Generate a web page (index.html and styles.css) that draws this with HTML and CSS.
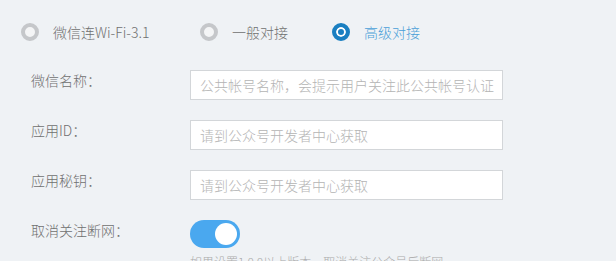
FILE: index.html
```html
<!DOCTYPE html>
<html lang="zh">
<head>
<meta charset="utf-8">
<link rel="stylesheet" href="styles.css">
</head>
<body>
<div class="page">
  <div class="radios">
    <label class="radio"><span class="dot"></span><span class="rtext">微信连Wi-Fi-3.1</span></label>
    <label class="radio"><span class="dot"></span><span class="rtext">一般对接</span></label>
    <label class="radio on"><span class="dot"></span><span class="rtext">高级对接</span></label>
  </div>
  <div class="form">
    <div class="row">
      <div class="lbl">微信名称：</div>
      <div class="field"><div class="input">公共帐号名称，会提示用户关注此公共帐号认证</div></div>
    </div>
    <div class="row">
      <div class="lbl">应用ID：</div>
      <div class="field"><div class="input">请到公众号开发者中心获取</div></div>
    </div>
    <div class="row">
      <div class="lbl">应用秘钥：</div>
      <div class="field"><div class="input">请到公众号开发者中心获取</div></div>
    </div>
    <div class="row">
      <div class="lbl">取消关注断网：</div>
      <div class="field">
        <div class="switch"><span class="knob"></span></div>
        <div class="hint">如果设置1.0.0以上版本，取消关注公众号后断网</div>
      </div>
    </div>
  </div>
</div>
</body>
</html>
```

FILE: styles.css
```css
html, body {
  margin: 0;
  padding: 0;
}
body {
  background: #eff2f5;
  font-family: "Microsoft YaHei", "Noto Sans CJK SC", "Noto Sans", sans-serif;
  font-size: 14px;
  font-weight: 300;
  color: #707070;
  width: 616px;
  height: 261px;
  overflow: hidden;
}
.page {
  padding: 22px 0 0 21px;
}
.radios {
  display: flex;
  align-items: center;
  height: 20px;
}
.radio {
  display: flex;
  align-items: center;
}
.radio:nth-child(1) { width: 179px; }
.radio:nth-child(2) { width: 132px; }
.dot {
  width: 18px;
  height: 18px;
  box-sizing: border-box;
  border-radius: 50%;
  border: 4px solid #c5c7ca;
  background: #f4f5f6;
  margin-right: 14px;
}
.radio.on .dot {
  border: 4px solid #1a7fc1;
  background: #1a7fc1;
  box-shadow: inset 0 0 0 2px #fff;
}
.rtext {
  color: #707070;
  line-height: 20px;
}
.radio.on .rtext {
  color: #4a9fd8;
}
.form {
  margin-top: 28px;
  padding-left: 10px;
}
.row {
  display: flex;
  align-items: flex-start;
  margin-bottom: 20px;
}
.lbl {
  width: 159px;
  line-height: 20px;
  color: #707070;
}
.input {
  width: 313px;
  height: 30px;
  box-sizing: border-box;
  border: 1px solid #d3d6d9;
  background: #fff;
  color: #b4b4b4;
  line-height: 28px;
  padding-left: 9px;
  white-space: nowrap;
  overflow: hidden;
}
.switch {
  width: 50px;
  height: 28px;
  border-radius: 14px;
  background: #4aa8ef;
  position: relative;
}
.knob {
  position: absolute;
  right: 3px;
  top: 3px;
  width: 22px;
  height: 22px;
  border-radius: 50%;
  background: #fff;
}
.hint {
  margin-top: 6px;
  font-size: 12px;
  color: #aaa;
  line-height: 16px;
}
```
